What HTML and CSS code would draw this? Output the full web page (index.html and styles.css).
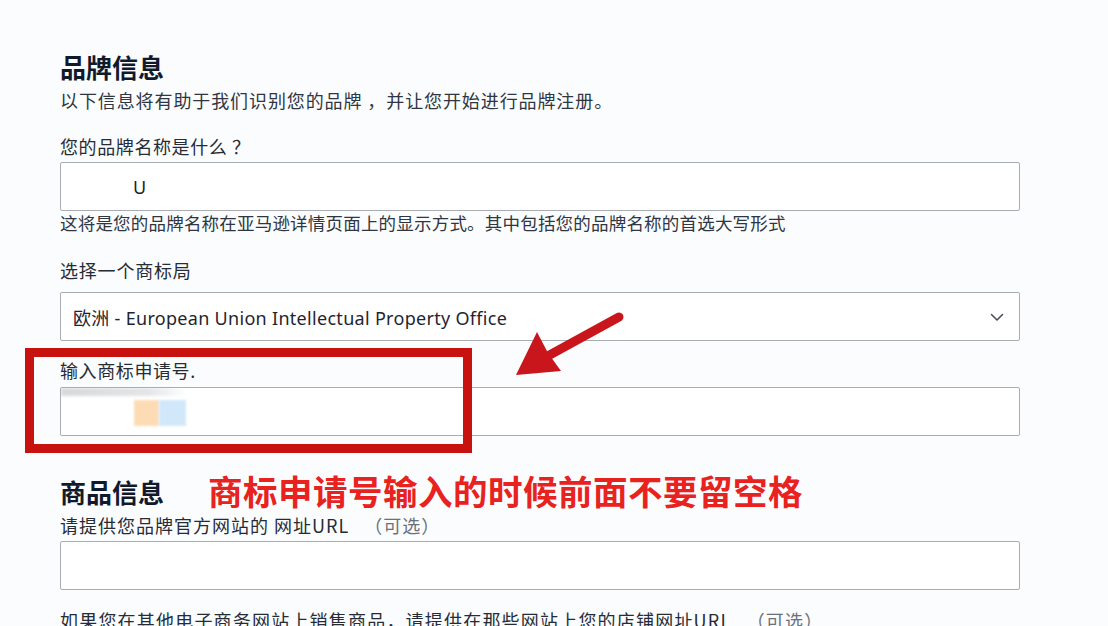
FILE: index.html
```html
<!DOCTYPE html>
<html lang="zh-CN">
<head>
<meta charset="utf-8">
<title>品牌信息</title>
<link rel="stylesheet" href="styles.css">
</head>
<body>
<div class="page">
  <h1 class="title">品牌信息</h1>
  <p class="sub">以下信息将有助于我们识别您的品牌 ，并让您开始进行品牌注册。</p>

  <label class="label l1">您的品牌名称是什么 ？</label>
  <div class="field f1"><span class="val">U</span></div>
  <p class="help">这将是您的品牌名称在亚马逊详情页面上的显示方式。其中包括您的品牌名称的首选大写形式</p>

  <label class="label l2">选择一个商标局</label>
  <div class="field select">
    <span class="val">欧洲 - European Union Intellectual Property Office</span>
    <svg class="chev" width="14" height="9" viewBox="0 0 14 9"><polyline points="1.5,1.5 7,7 12.5,1.5" fill="none" stroke="#4a4f57" stroke-width="1.6" stroke-linecap="round" stroke-linejoin="round"/></svg>
  </div>

  <label class="label l3">输入商标申请号.</label>
  <div class="field f3">
    <span class="smear"></span>
    <span class="sq orange"></span><span class="sq blue"></span>
  </div>

  <div class="row2">
    <h2 class="title">商品信息</h2>
    <span class="note">商标申请号输入的时候前面不要留空格</span>
  </div>
  <label class="label l4">请提供您品牌官方网站的 网址URL <span class="opt">（可选）</span></label>
  <div class="field f4"></div>
  <p class="label l5">如果您在其他电子商务网站上销售商品，请提供在那些网站上您的店铺网址URL <span class="opt">（可选）</span></p>
</div>

<div class="redbox"></div>
<svg class="arrow" width="1108" height="626" viewBox="0 0 1108 626">
  <defs>
    <filter id="glow" x="-20%" y="-20%" width="140%" height="140%">
      <feGaussianBlur stdDeviation="0.7"/>
    </filter>
  </defs>
  <g filter="url(#glow)">
    <line x1="619" y1="317" x2="546" y2="357" stroke="#c8161b" stroke-width="9" stroke-linecap="round"/>
    <polygon points="516,375 537,332 548,353 561,371" fill="#c8161b"/>
  </g>
</svg>
</body>
</html>
```
FILE: styles.css
```css
html, body {
  margin: 0;
  padding: 0;
  background: #fbfcfe;
}
body {
  width: 1108px;
  height: 626px;
  overflow: hidden;
  position: relative;
  font-family: "Noto Sans", "Noto Sans CJK SC", sans-serif;
  color: #2e3440;
}
.page {
  padding: 51px 0 0 60px;
  width: 960px;
  display: flex;
  flex-direction: column;
}
.title {
  margin: 0;
  font-family: "Noto Sans CJK SC", sans-serif;
  font-size: 26px;
  line-height: 32px;
  font-weight: 700;
  color: #111a2b;
}
.sub {
  margin: 5px 0 0;
  font-family: "Noto Sans CJK SC", sans-serif;
  font-size: 18px;
  line-height: 24px;
  letter-spacing: 0.9px;
  color: #2f3641;
}
.label {
  display: block;
  margin: 0;
  font-family: "Noto Sans CJK SC", sans-serif;
  font-size: 18px;
  line-height: 24px;
  letter-spacing: 0.6px;
  color: #262c36;
}
.l1 { margin-top: 22px; }
.l2 { margin-top: 23px; letter-spacing: 0.8px; }
.l3 { margin-top: 17px; }
.l4 { margin-top: 3px; letter-spacing: 1px; }
.l5 { margin-top: 18px; letter-spacing: 1.2px; white-space: nowrap; }
.opt { color: #6b717a; margin-left: 10px; }
.field {
  box-sizing: border-box;
  height: 49px;
  width: 960px;
  border: 1px solid #a9adb3;
  border-radius: 2px;
  background: #ffffff;
  display: flex;
  align-items: center;
  position: relative;
  overflow: hidden;
}
.f1 { margin-top: 4px; padding-left: 72px; }
.f1 .val { font-size: 18px; color: #1a1f27; }
.help {
  margin: 0;
  font-family: "Noto Sans CJK SC", sans-serif;
  font-size: 17.5px;
  line-height: 24px;
  letter-spacing: 0.2px;
  color: #2f3641;
}
.select {
  margin-top: 10px;
  padding: 0 15px 0 12px;
  justify-content: space-between;
}
.select .val {
  font-size: 18px;
  color: #1f2530;
  letter-spacing: 0.3px;
}
.chev { margin-top: 1px; }
.f3 {
  margin-top: 5px;
  padding-left: 73px;
}
.smear {
  position: absolute;
  left: 0;
  top: 0;
  width: 126px;
  height: 8px;
  background: linear-gradient(to right, #d6d8db 0%, #e4e5e7 70%, rgba(240,240,242,0) 100%);
  filter: blur(1.5px);
}
.sq {
  width: 25px;
  height: 26px;
  margin-top: 2px;
  filter: blur(0.8px);
}
.orange { background: #fddcb5; }
.blue { background: #d1e8fa; width: 27px; }
.row2 {
  margin-top: 38px;
  display: flex;
  align-items: center;
  gap: 44px;
  height: 36px;
}
.note {
  font-family: "Noto Sans CJK SC", sans-serif;
  font-size: 34.5px;
  font-weight: 700;
  line-height: 1;
  color: #e8221e;
  letter-spacing: 0.5px;
  margin-top: -4px;
  text-shadow: 0 0 2px rgba(255,255,255,0.9);
}
.f4 { margin-top: 4px; }
.redbox {
  position: absolute;
  left: 25px;
  top: 348px;
  width: 447px;
  height: 105px;
  box-sizing: border-box;
  border: 9px solid #c8120f;
  pointer-events: none;
}
.arrow {
  position: absolute;
  left: 0;
  top: 0;
  pointer-events: none;
}
```
